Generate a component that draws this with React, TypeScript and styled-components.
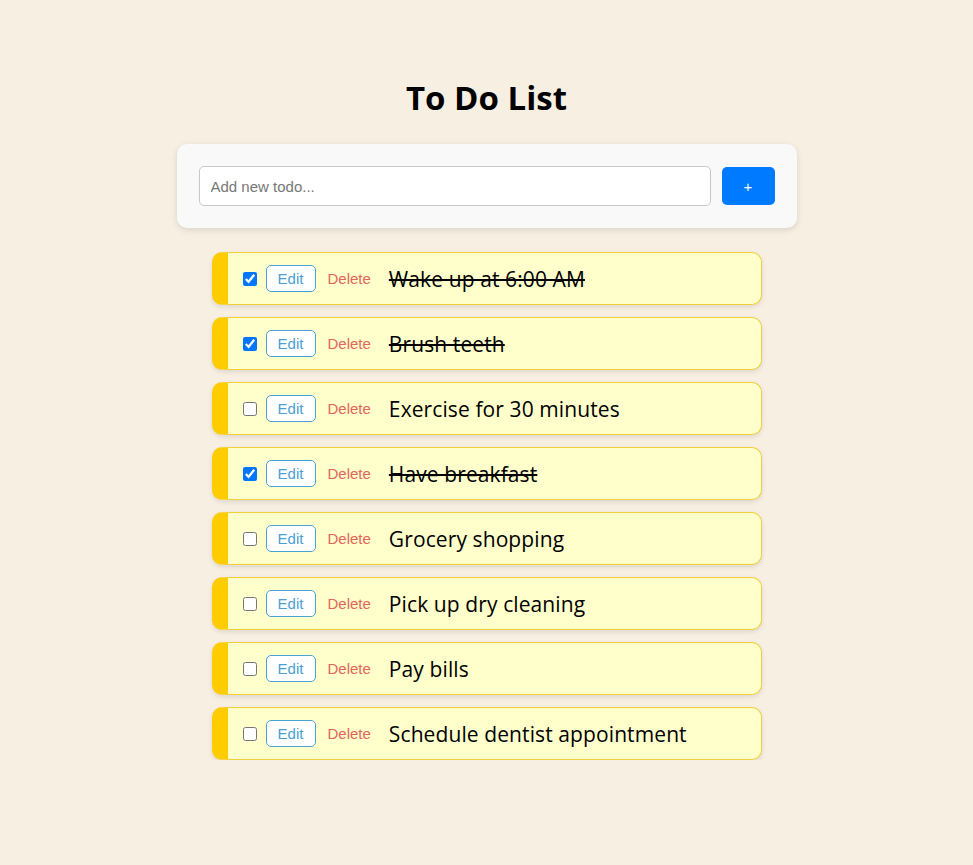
import React, { useState } from 'react';
import styled, { createGlobalStyle } from 'styled-components';

interface Todo {
    id: number;
    text: string;
    done: boolean;
}

const initialTodos: Todo[] = [
    { id: 1, text: 'Wake up at 6:00 AM', done: true },
    { id: 2, text: 'Brush teeth', done: true },
    { id: 3, text: 'Exercise for 30 minutes', done: false },
    { id: 4, text: 'Have breakfast', done: true },
    { id: 5, text: 'Grocery shopping', done: false },
    { id: 6, text: 'Pick up dry cleaning', done: false },
    { id: 7, text: 'Pay bills', done: false },
    { id: 8, text: 'Schedule dentist appointment', done: false },
];

const GlobalStyle = createGlobalStyle`
    body {
        margin: 0;
        background: #f7efe2;
        font-family: "Open Sans", "Noto Sans", sans-serif;
    }
`;

const Page = styled.div`
    display: flex;
    flex-direction: column;
    align-items: center;
    padding-top: 76px;
`;

const Title = styled.h1`
    margin: 0 0 24px;
    font-family: "Open Sans", sans-serif;
    font-size: 33px;
    font-weight: 700;
    line-height: 44px;
    color: #000;
`;

const AddCard = styled.form`
    display: flex;
    align-items: center;
    gap: 11px;
    width: 620px;
    box-sizing: border-box;
    padding: 22px;
    background: #f9f9f9;
    border-radius: 10px;
    box-shadow: 0 2px 6px rgba(0, 0, 0, 0.12);
    margin-bottom: 25px;
`;

const TextInput = styled.input`
    flex: 1;
    height: 40px;
    box-sizing: border-box;
    padding: 0 11px;
    border: 1px solid #c8c8c8;
    border-radius: 5px;
    background: #fff;
    font-family: "Liberation Sans", Arial, sans-serif;
    font-size: 15px;
    color: #333;
    outline: none;

    &::placeholder {
        color: #777;
    }
`;

const AddButton = styled.button`
    width: 53px;
    height: 38px;
    border: none;
    border-radius: 5px;
    background: #007bff;
    color: #fff;
    font-family: "Liberation Sans", Arial, sans-serif;
    font-size: 15px;
    cursor: pointer;
`;

const List = styled.ul`
    list-style: none;
    margin: -1px 0 0;
    padding: 0;
    width: 550px;
    display: flex;
    flex-direction: column;
    gap: 12px;
`;

const Row = styled.li`
    display: flex;
    align-items: center;
    height: 53px;
    box-sizing: border-box;
    padding-left: 15px;
    background: #ffffcc;
    border: 1px solid #f0cf3c;
    border-left: 16px solid #ffcc00;
    border-radius: 10px;
    box-shadow: 0 2px 5px rgba(0, 0, 0, 0.1);
`;

const Check = styled.input`
    width: 14px;
    height: 14px;
    margin: 0 9px 0 0;
`;

const EditButton = styled.button`
    width: 50px;
    height: 27px;
    padding: 0;
    border: 1px solid #4aa3d6;
    border-radius: 5px;
    background: #fff;
    color: #4a9fd3;
    font-family: "Liberation Sans", Arial, sans-serif;
    font-size: 15px;
    cursor: pointer;
`;

const DeleteButton = styled.button`
    margin-left: 12px;
    padding: 0;
    border: none;
    background: none;
    color: #e2665b;
    font-family: "Liberation Sans", Arial, sans-serif;
    font-size: 15px;
    cursor: pointer;
`;

const Label = styled.span<{ $done: boolean }>`
    margin-left: 18px;
    font-size: 21px;
    font-weight: 500;
    letter-spacing: 0.1px;
    color: #000;
    text-decoration: ${({ $done }) => ($done ? 'line-through' : 'none')};
    text-decoration-thickness: 2px;
`;

export default function App() {
    const [todos, setTodos] = useState<Todo[]>(initialTodos);
    const [draft, setDraft] = useState('');

    const toggle = (id: number) =>
        setTodos((list) => list.map((t) => (t.id === id ? { ...t, done: !t.done } : t)));

    const remove = (id: number) => setTodos((list) => list.filter((t) => t.id !== id));

    const add = (e: React.FormEvent) => {
        e.preventDefault();
        if (!draft.trim()) return;
        setTodos((list) => [...list, { id: Date.now(), text: draft.trim(), done: false }]);
        setDraft('');
    };

    return (
        <Page>
            <GlobalStyle />
            <Title>To Do List</Title>
            <AddCard onSubmit={add}>
                <TextInput
                    value={draft}
                    onChange={(e) => setDraft(e.target.value)}
                    placeholder="Add new todo..."
                />
                <AddButton type="submit">+</AddButton>
            </AddCard>
            <List>
                {todos.map((todo) => (
                    <Row key={todo.id}>
                        <Check type="checkbox" checked={todo.done} onChange={() => toggle(todo.id)} />
                        <EditButton>Edit</EditButton>
                        <DeleteButton onClick={() => remove(todo.id)}>Delete</DeleteButton>
                        <Label $done={todo.done}>{todo.text}</Label>
                    </Row>
                ))}
            </List>
        </Page>
    );
}
